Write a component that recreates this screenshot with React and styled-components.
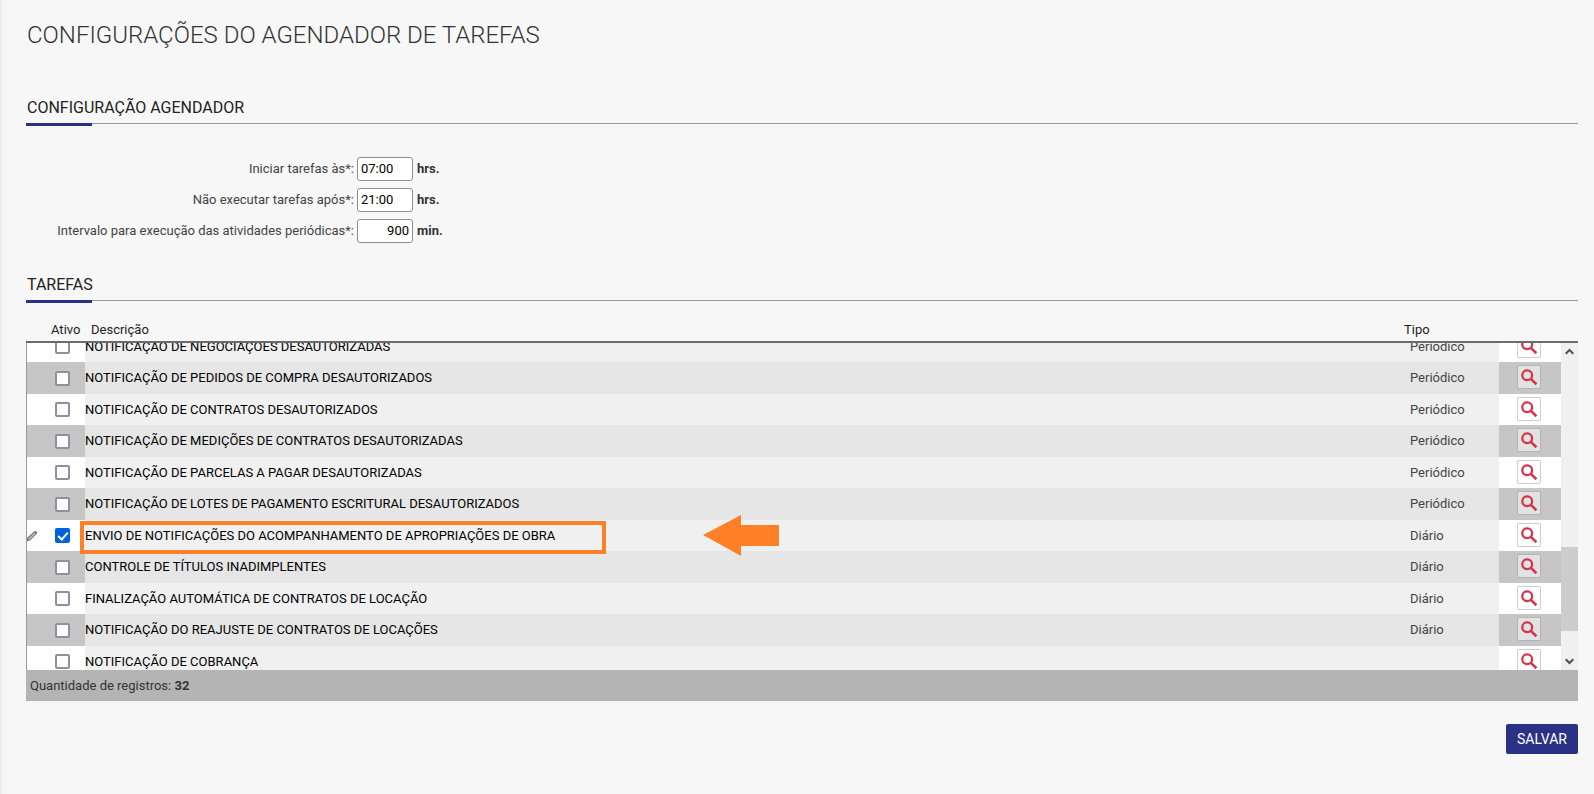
import React, { useLayoutEffect, useRef, useState } from "react";
import styled, { createGlobalStyle } from "styled-components";

const GlobalStyle = createGlobalStyle`
  *,
  *::before,
  *::after {
    box-sizing: border-box;
  }
  body {
    margin: 0;
    background: #f7f7f7;
    color: #444;
    font: 13px/18px Roboto, "Liberation Sans", sans-serif;
  }
`

const Page = styled.main`
  min-height: 100vh;
  padding: 20px 16px 40px 26px;
  box-shadow: inset 3px 0 3px -2px #e4e4e4;
`

const Title = styled.h1`
  margin: 0 0 48px;
  color: #333;
  font-size: 24px;
  font-weight: 300;
  line-height: 30px;
  text-indent: 1px;
`

const SectionTitle = styled.h2`
  margin: 0;
  height: 26px;
  border-bottom: 1px solid #999;
  color: #222;
  font-size: 16px;
  font-weight: 400;
  line-height: 20px;
  text-indent: 1px;

  &::after {
    content: "";
    display: block;
    width: 66px;
    height: 3px;
    margin-top: 5px;
    background: #2a3285;
  }
`

const Fields = styled.div`
  display: grid;
  gap: 7px;
  padding: 33px 0 32px;
`

const Field = styled.div`
  display: grid;
  grid-template-columns: 328px 56px auto;
  column-gap: 3px;
  align-items: center;
`

const Label = styled.label`
  text-align: right;
`

const Input = styled.input`
  width: 100%;
  height: 24px;
  padding: 0 3px 1px;
  border: 1px solid #8f8f8f;
  border-radius: 3px;
  background: #fff;
  color: #000;
  font: inherit;
  text-align: ${props => props.$align || "left"};
`

const Unit = styled.span`
  padding-left: 1px;
  color: #333;
  font-weight: 700;
`

const TableArea = styled.div`
  display: grid;
  grid-template-columns: 1fr 17px;
  padding-top: 18px;
`

const Table = styled.table`
  display: block;
  min-width: 0;
`

const Head = styled.thead`
  display: block;
  border-bottom: 2px solid #6b6b6b;
`

const Body = styled.tbody`
  display: block;
  height: 327px;
  overflow-y: auto;
  border-left: 1px solid #999;
  scrollbar-width: none;
`

const HeadRow = styled.tr`
  display: grid;
  grid-template-columns: 59px 1fr 95px 62px;
  height: 22px;
`

const HeadCell = styled.th`
  padding: 0 0 0 ${props => props.$indent || 0}px;
  color: #222;
  font-weight: 400;
  line-height: 22px;
  text-align: left;
`

const Row = styled.tr`
  --side: #fff;
  --fill: #f0f0f0;
  --button: #fff;
  display: grid;
  grid-template-columns: 58px 1fr 95px 62px;
  height: 31px;

  &:nth-child(even) {
    --side: #c6c6c6;
    --fill: #e6e6e6;
    --button: #e2e2e2;
    height: 32px;
  }
`

const ActiveCell = styled.td`
  display: flex;
  align-items: center;
  justify-content: space-between;
  padding: 0 15px 0 0;
  background: var(--side);
`

const TextCell = styled.td`
  position: relative;
  padding: 0 0 0 ${props => props.$indent || 0}px;
  background: var(--fill);
  color: ${props => props.$color || "#444"};
  line-height: 31px;
  white-space: nowrap;
`

const ActionCell = styled.td`
  padding: 3px 0 0 18px;
  background: var(--side);
`

const Check = styled.input`
  appearance: none;
  display: grid;
  place-items: center;
  width: 15px;
  height: 15px;
  margin: 0 0 0 auto;
  border: 2px solid #8f8f9d;
  border-radius: 2px;
  background: #fff;

  &:checked {
    border-color: #0060df;
    background: #0060df;
  }
  &:checked::after {
    content: "";
    width: 6px;
    height: 10px;
    margin-bottom: 3px;
    border: solid #fff;
    border-width: 0 2px 2px 0;
    transform: rotate(42deg);
  }
`

const IconButton = styled.button`
  display: grid;
  place-items: center;
  width: 24px;
  height: 24px;
  padding: 0;
  border: 1px solid rgba(0, 0, 0, 0.2);
  border-radius: 2px;
  background: var(--button);
`

const Outline = styled.span`
  position: absolute;
  top: 1px;
  left: -5px;
  z-index: 1;
  width: 526px;
  height: 33px;
  border: 4px solid #ff8027;
  pointer-events: none;
`

const Arrow = styled.svg`
  position: absolute;
  top: -5px;
  left: 618px;
  z-index: 1;
  pointer-events: none;
`

const ScrollBar = styled.div`
  display: flex;
  flex-direction: column;
  margin-top: 22px;
  border-top: 2px solid #6b6b6b;
  background: #f0f0f0;
`

const ScrollButton = styled.button`
  display: grid;
  place-items: center;
  width: 17px;
  height: 17px;
  padding: 0;
  border: 0;
  background: none;
`

const Track = styled.div`
  display: flex;
  flex: 1;
  flex-direction: column;

  &::before {
    content: "";
    flex: 187;
  }
  &::after {
    content: "";
    flex: 22;
  }
`

const Thumb = styled.div`
  flex: 84;
  background: #cdcdcd;
`

const Summary = styled.div`
  padding: 0 4px;
  background: #b4b4b4;
  color: #333;
  line-height: 31px;
`

const Actions = styled.div`
  display: flex;
  justify-content: flex-end;
  padding-top: 23px;
`

const SaveButton = styled.button`
  width: 72px;
  height: 30px;
  padding: 0;
  border: 0;
  border-radius: 2px;
  background: #2a3285;
  color: #fff;
  font: 14px/30px Roboto, "Liberation Sans", sans-serif;
`

const fields = [
  { id: "inicio", label: "Iniciar tarefas às*:", value: "07:00", unit: "hrs." },
  { id: "fim", label: "Não executar tarefas após*:", value: "21:00", unit: "hrs." },
  {
    id: "intervalo",
    label: "Intervalo para execução das atividades periódicas*:",
    value: "900",
    unit: "min.",
    align: "right",
  },
]

const tasks = [
  { name: "NOTIFICAÇÃO DE NEGOCIAÇÕES DESAUTORIZADAS", type: "Periódico" },
  { name: "NOTIFICAÇÃO DE PEDIDOS DE COMPRA DESAUTORIZADOS", type: "Periódico" },
  { name: "NOTIFICAÇÃO DE CONTRATOS DESAUTORIZADOS", type: "Periódico" },
  { name: "NOTIFICAÇÃO DE MEDIÇÕES DE CONTRATOS DESAUTORIZADAS", type: "Periódico" },
  { name: "NOTIFICAÇÃO DE PARCELAS A PAGAR DESAUTORIZADAS", type: "Periódico" },
  { name: "NOTIFICAÇÃO DE LOTES DE PAGAMENTO ESCRITURAL DESAUTORIZADOS", type: "Periódico" },
  {
    name: "ENVIO DE NOTIFICAÇÕES DO ACOMPANHAMENTO DE APROPRIAÇÕES DE OBRA",
    type: "Diário",
    active: true,
    highlighted: true,
  },
  { name: "CONTROLE DE TÍTULOS INADIMPLENTES", type: "Diário" },
  { name: "FINALIZAÇÃO AUTOMÁTICA DE CONTRATOS DE LOCAÇÃO", type: "Diário" },
  { name: "NOTIFICAÇÃO DO REAJUSTE DE CONTRATOS DE LOCAÇÕES", type: "Diário" },
  { name: "NOTIFICAÇÃO DE COBRANÇA", type: "" },
]

const SearchIcon = () => (
  <svg width="18" height="18" viewBox="0 0 18 18" fill="none" stroke="#d2364c">
    <circle cx="7.2" cy="7.2" r="4.9" strokeWidth="2.3" />
    <path d="M10.6 10.6L16.4 16.2" strokeWidth="2.6" />
  </svg>
)

const PencilIcon = () => (
  <svg width="11" height="12" viewBox="0 0 11 12">
    <path d="M0 8L7 1.4Q8.3.4 9.6 1.4Q10.8 2.6 9.7 4L3 10.6L0 11.2Z" fill="#777" />
    <path d="M.8 9L7.5 2.6L8.6 3.7L2.2 9.9Z" fill="#b9b9b9" />
  </svg>
)

const Chevron = ({ down }) => (
  <svg width="9" height="7" viewBox="0 0 9 7" fill="none" stroke="#505050" strokeWidth="2">
    <path d={down ? "M.7 1.2L4.5 5L8.3 1.2" : "M.7 5.8L4.5 2L8.3 5.8"} />
  </svg>
)

const TaskRow = ({ task }) => {
  const [active, setActive] = useState(Boolean(task.active))

  return (
    <Row>
      <ActiveCell>
        {task.highlighted && <PencilIcon />}
        <Check
          type="checkbox"
          aria-label={task.name}
          checked={active}
          onChange={() => setActive(!active)}
        />
      </ActiveCell>
      <TextCell $color="#000">
        {task.name}
        {task.highlighted && (
          <>
            <Outline />
            <Arrow width="76" height="41" viewBox="0 0 76 41">
              <path d="M0 20L38 0V10H76V31H38V41Z" fill="#ff8027" />
            </Arrow>
          </>
        )}
      </TextCell>
      <TextCell $indent={6}>{task.type}</TextCell>
      <ActionCell>
        <IconButton type="button" aria-label={`Consultar ${task.name}`}>
          <SearchIcon />
        </IconButton>
      </ActionCell>
    </Row>
  )
}

export default () => {
  const bodyRef = useRef(null)

  useLayoutEffect(() => {
    bodyRef.current.scrollTop = 12
  }, [])

  const scrollBy = amount => () => {
    bodyRef.current.scrollTop += amount
  }

  return (
    <>
      <GlobalStyle />
      <Page>
        <Title>CONFIGURAÇÕES DO AGENDADOR DE TAREFAS</Title>
        <SectionTitle>CONFIGURAÇÃO AGENDADOR</SectionTitle>
        <Fields>
          {fields.map(({ id, label, value, unit, align }) => (
            <Field key={id}>
              <Label htmlFor={id}>{label}</Label>
              <Input id={id} type="text" defaultValue={value} $align={align} />
              <Unit>{unit}</Unit>
            </Field>
          ))}
        </Fields>
        <SectionTitle>TAREFAS</SectionTitle>
        <TableArea>
          <Table>
            <Head>
              <HeadRow>
                <HeadCell $indent={25}>Ativo</HeadCell>
                <HeadCell $indent={6}>Descrição</HeadCell>
                <HeadCell>Tipo</HeadCell>
              </HeadRow>
            </Head>
            <Body ref={bodyRef}>
              {tasks.map(task => (
                <TaskRow key={task.name} task={task} />
              ))}
            </Body>
          </Table>
          <ScrollBar>
            <ScrollButton type="button" aria-label="Rolar para cima" onClick={scrollBy(-31)}>
              <Chevron />
            </ScrollButton>
            <Track>
              <Thumb />
            </Track>
            <ScrollButton type="button" aria-label="Rolar para baixo" onClick={scrollBy(31)}>
              <Chevron down />
            </ScrollButton>
          </ScrollBar>
        </TableArea>
        <Summary>
          Quantidade de registros: <b>32</b>
        </Summary>
        <Actions>
          <SaveButton type="button">SALVAR</SaveButton>
        </Actions>
      </Page>
    </>
  )
}
